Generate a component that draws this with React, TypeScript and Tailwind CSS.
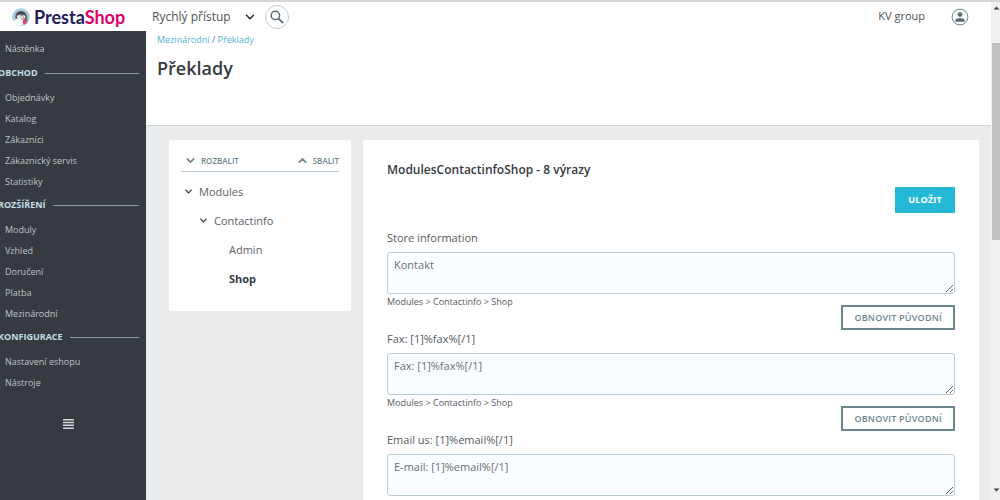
import { ChevronDown, ChevronUp } from 'lucide-react';

const sections = [
  { title: 'OBCHOD', items: ['Objednávky', 'Katalog', 'Zákazníci', 'Zákaznický servis', 'Statistiky'] },
  { title: 'ROZŠÍŘENÍ', items: ['Moduly', 'Vzhled', 'Doručení', 'Platba', 'Mezinárodní'] },
  { title: 'KONFIGURACE', items: ['Nastavení eshopu', 'Nástroje'] },
];

const fields = [
  { id: 'store', label: 'Store information', value: 'Kontakt' },
  { id: 'fax', label: 'Fax: [1]%fax%[/1]', value: 'Fax: [1]%fax%[/1]' },
  { id: 'email', label: 'Email us: [1]%email%[/1]', value: 'E-mail: [1]%email%[/1]' },
];

function Logo() {
  return (
    <a href="#" className="flex items-center gap-1 pl-3">
      <svg viewBox="0 0 36 36" className="size-[18px]" aria-hidden="true">
        <circle cx="18" cy="18" r="17.5" fill="#a4cfdc" />
        <path d="M8 24C4 14 9 7 17 6c9-1 15 8 13 18l-8 8-8-2Z" fill="#5b6068" />
        <path d="M3 27c6-9 20-10 22-2 0 5-4 9-9 10-6 0-11-3-13-8Z" fill="#fff" />
        <path d="M9 14c2-8 15-9 18-1-5-3-12-3-18 1Z" fill="#4b3f47" />
        <ellipse cx="15" cy="18" rx="5" ry="4" fill="#f4f4f4" />
        <ellipse cx="23" cy="18" rx="4" ry="3.5" fill="#e8e4e4" />
        <circle cx="16" cy="18" r="1" fill="#444" />
        <circle cx="23" cy="18" r="1" fill="#444" />
        <path d="M17 21c3-2 6-1 7 1-2 3-5 3-7-1Z" fill="#dba987" />
        <path d="M22 24c4-3 8-3 9 0 0 5-3 8-7 9-3-2-3-6-2-9Z" fill="#c94a72" />
      </svg>
      <span className="font-['Lato',sans-serif] text-[18px] leading-6 font-bold text-[#251b5b]">
        Presta<span className="text-[#df0067]">Shop</span>
      </span>
    </a>
  );
}

function Header() {
  return (
    <header className="flex h-[29px] shrink-0 items-center">
      <div className="w-[146px] shrink-0">
        <Logo />
      </div>
      <button className="flex items-center gap-3 pl-[6px] text-[12px] leading-5 text-[#4e5457]">
        Rychlý přístup
        <ChevronDown size={14} strokeWidth={3} className="text-[#363a41]" />
      </button>
      <button aria-label="Hledat" className="ml-2 flex size-6 items-center justify-center rounded-full border border-[#c5ccd0]">
        <svg viewBox="0 0 16 16" className="size-4" fill="none" stroke="#5d6d74">
          <circle cx="6.4" cy="6.4" r="4.2" strokeWidth="1.5" />
          <path d="M9.6 9.6 14.2 14.2" strokeWidth="1.9" />
        </svg>
      </button>
      <span className="ml-auto text-[11px] text-[#4e5457]">KV group</span>
      <button aria-label="Účet" className="mr-[22px] ml-[26px]">
        <svg viewBox="0 0 18 18" className="size-[18px]">
          <circle cx="9" cy="9" r="7.9" fill="#fff" stroke="#6c868e" strokeWidth="1" />
          <circle cx="9" cy="6.6" r="2.4" fill="#5d6d74" />
          <path d="M4.2 13.7V13c0-2 2.4-2.9 4.8-2.9s4.8.9 4.8 2.9v.7Z" fill="#5d6d74" />
        </svg>
      </button>
    </header>
  );
}

function Sidebar() {
  return (
    <nav className="w-[146px] shrink-0 bg-[#363a41] pt-[7px] text-[9px] text-[#bec2c5]">
      <a href="#" className="mb-[2px] flex h-[21px] items-center pl-[5px]">Nástěnka</a>
      {sections.map((s) => (
        <section key={s.title} className="mb-px">
          <h2 className="-ml-[2px] mb-[2px] flex h-6 items-center gap-[7px] pr-[7px] font-bold text-[#bfdfe4]">
            {s.title}
            <span className="h-px flex-1 bg-[#899ba3]" />
          </h2>
          {s.items.map((i) => (
            <a key={i} href="#" className="flex h-[21px] items-center pl-[5px]">{i}</a>
          ))}
        </section>
      ))}
      <div className="flex justify-center pt-[25px] pr-[10px]">
        <button aria-label="Sbalit menu">
          <svg viewBox="0 0 11 10" className="h-[10px] w-[11px]" fill="#d4d6d8">
            <path d="M0 0h11v1.5H0ZM0 2.8h11v1.5H0ZM0 5.6h11v1.5H0ZM0 8.4h11v1.5H0Z" />
          </svg>
        </button>
      </div>
    </nav>
  );
}

function Tree() {
  return (
    <aside className="w-[182px] shrink-0 rounded-xs bg-white px-3 pt-[10px] pb-[18px] text-[11px] text-[#5d6266]">
      <div className="flex h-[22px] items-center justify-between border-b border-[#bbcdd2] pl-[3px] text-[8px] font-semibold text-[#6c868e]">
        <button className="flex items-center gap-1">
          <ChevronDown size={13} strokeWidth={3} />
          ROZBALIT
        </button>
        <button className="flex items-center gap-1">
          <ChevronUp size={13} strokeWidth={3} />
          SBALIT
        </button>
      </div>
      <ul className="pt-[5px] leading-[29px]">
        <li className="flex items-center gap-[5px] pl-[2px]">
          <ChevronDown size={11} strokeWidth={3} className="text-[#363a41]" />
          Modules
        </li>
        <li className="flex items-center gap-[5px] pl-[17px]">
          <ChevronDown size={11} strokeWidth={3} className="text-[#363a41]" />
          Contactinfo
        </li>
        <li className="pl-12">Admin</li>
        <li className="pl-12 font-bold text-[#363a41]">Shop</li>
      </ul>
    </aside>
  );
}

function Translations() {
  return (
    <form className="min-w-0 flex-1 self-start rounded-xs bg-white px-6 pt-5 text-[11px] text-[#565b5f]">
      <h2 className="text-[12px] leading-5 font-semibold text-[#363a41]">ModulesContactinfoShop - 8 výrazy</h2>
      <div className="mt-[7px] mb-4 flex justify-end">
        <button type="button" className="h-[26px] bg-[#25b9d7] px-[13px] text-[9px] font-bold tracking-wide text-white">ULOŽIT</button>
      </div>
      {fields.map((f) => (
        <div key={f.id}>
          <label htmlFor={f.id} className="mb-[6px] block leading-[17px]">{f.label}</label>
          <textarea
            id={f.id}
            defaultValue={f.value}
            className="block h-[42px] w-full resize rounded-[3px] border border-[#bbcdd2] bg-[#fafdff] px-[6px] py-1 leading-4 text-[#6a7074]"
          />
          <div className="flex items-start justify-between">
            <span className="text-[9px] leading-4">Modules &gt; Contactinfo &gt; Shop</span>
            <button type="button" className="mt-[11px] h-[25px] border-2 border-[#6c868e] px-[11px] text-[9px] font-semibold tracking-wide text-[#6c868e]">
              OBNOVIT PŮVODNÍ
            </button>
          </div>
        </div>
      ))}
    </form>
  );
}

function Scrollbar() {
  return (
    <div aria-hidden="true" className="flex w-[9px] shrink-0 flex-col items-end bg-[#f1f1f1]">
      <svg viewBox="0 0 8 41" className="h-[41px] w-2"><path d="M1.5 7.5 4.5 4.5 7.5 7.5Z" fill="#404040" /></svg>
      <div className="h-[197px] w-2 bg-[#c1c1c1]" />
      <svg viewBox="0 0 8 10" className="mt-auto mb-1 h-[10px] w-2"><path d="M1.5 2.5h6l-3 3Z" fill="#404040" /></svg>
    </div>
  );
}

export default function App() {
  return (
    <div className="flex h-screen overflow-hidden border-t-2 border-[#d6d6d6] bg-white font-['Open_Sans','Noto_Sans',sans-serif]">
      <div className="flex min-w-0 flex-1 flex-col">
        <Header />
        <div className="flex min-h-0 flex-1">
          <Sidebar />
          <main className="min-w-0 flex-1 overflow-hidden bg-[#eaebec]">
            <div className="h-[95px] border-b border-[#cfd8db] bg-white pl-[11px]">
              <div className="pt-[2px] text-[9px] leading-[14px] text-[#5d6266]">
                <a href="#" className="text-[#4eb8d0]">Mezinárodní</a> / <a href="#" className="text-[#4eb8d0]">Překlady</a>
              </div>
              <h1 className="mt-[7px] text-[18px] leading-7 font-semibold text-[#363a41]">Překlady</h1>
            </div>
            <div className="flex items-start gap-3 pt-[14px] pr-3 pl-[23px]">
              <Tree />
              <Translations />
            </div>
          </main>
        </div>
      </div>
      <Scrollbar />
    </div>
  );
}
